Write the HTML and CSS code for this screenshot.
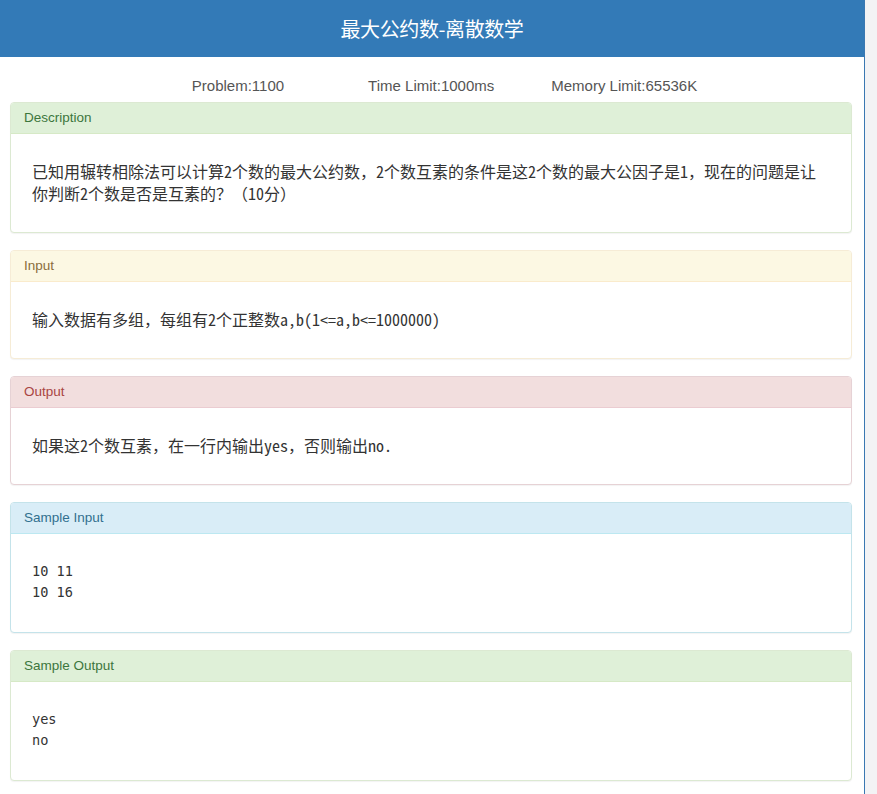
FILE: index.html
```html
<!DOCTYPE html>
<html lang="zh-CN">
<head>
<meta charset="utf-8">
<title>最大公约数-离散数学</title>
<link rel="stylesheet" href="styles.css">
</head>
<body>
<div class="page">
  <header class="header">
    <h1 class="title">最大公约数-离散数学</h1>
  </header>
  <div class="meta">
    <span class="meta-item meta-problem">Problem:1100</span>
    <span class="meta-item meta-time">Time Limit:1000ms</span>
    <span class="meta-item">Memory Limit:65536K</span>
  </div>
  <main class="panels">
    <section class="panel panel-success">
      <div class="panel-heading">Description</div>
      <div class="panel-body">
        <p class="text">已知用辗转相除法可以计算2个数的最大公约数，2个数互素的条件是这2个数的最大公因子是1，现在的问题是让你判断2个数是否是互素的？（10分）</p>
      </div>
    </section>
    <section class="panel panel-warning">
      <div class="panel-heading">Input</div>
      <div class="panel-body">
        <p class="text">输入数据有多组，每组有2个正整数a,b(1&lt;=a,b&lt;=1000000)</p>
      </div>
    </section>
    <section class="panel panel-danger">
      <div class="panel-heading">Output</div>
      <div class="panel-body">
        <p class="text">如果这2个数互素，在一行内输出yes，否则输出no.</p>
      </div>
    </section>
    <section class="panel panel-info">
      <div class="panel-heading">Sample Input</div>
      <div class="panel-body sample">
        <pre class="code">10 11
10 16</pre>
      </div>
    </section>
    <section class="panel panel-success">
      <div class="panel-heading">Sample Output</div>
      <div class="panel-body sample">
        <pre class="code">yes
no</pre>
      </div>
    </section>
  </main>
</div>
</body>
</html>
```

FILE: styles.css
```css
html, body {
  margin: 0;
  padding: 0;
}
body {
  background: #f3f3f5;
  font-family: "Liberation Sans", Arial, "Noto Sans CJK SC", sans-serif;
  color: #333;
}
.page {
  width: 864px;
  min-height: 794px;
  background: #fff;
  border-right: 1px solid #3a78b2;
}
.header {
  height: 57px;
  background: #337ab7;
  display: flex;
  align-items: center;
  justify-content: center;
}
.title {
  margin: 0;
  font-family: "Noto Sans CJK SC", sans-serif;
  font-size: 20px;
  font-weight: 400;
  color: #fff;
  letter-spacing: -0.4px;
  line-height: 24px;
}
.meta {
  display: flex;
  justify-content: center;
  padding: 19px 0 6px 25px;
  font-size: 15px;
  line-height: 20px;
  color: #555;
}
.meta-problem {
  margin-right: 84px;
}
.meta-time {
  margin-right: 57px;
}
.panels {
  padding: 0 12px 0 10px;
}
.panel {
  border: 1px solid #ddd;
  border-radius: 4px;
  margin-bottom: 17px;
  background: #fff;
  box-shadow: 0 1px 1px rgba(0, 0, 0, 0.05);
}
.panel-heading {
  padding: 5px 13px;
  line-height: 20px;
  font-size: 13.5px;
  border-bottom: 1px solid transparent;
  border-radius: 3px 3px 0 0;
}
.panel-success { border-color: #dce9d2; }
.panel-success .panel-heading { background: #dff0d8; color: #3c763d; border-bottom-color: #d6e9c6; }
.panel-warning { border-color: #f6ecd6; }
.panel-warning .panel-heading { background: #fcf8e3; color: #8a6d3b; border-bottom-color: #faebcc; }
.panel-danger { border-color: #e6d2d5; }
.panel-danger .panel-heading { background: #f2dede; color: #a94442; border-bottom-color: #ebccd1; }
.panel-info { border-color: #c4e3ea; }
.panel-info .panel-heading { background: #d9edf7; color: #31708f; border-bottom-color: #bce8f1; }

.panel-body {
  padding: 26px 21px 28px;
}
.text {
  margin: 0;
  font-family: "Noto Sans Mono CJK SC", "DejaVu Sans Mono", "Noto Sans CJK SC", monospace;
  font-size: 16px;
  font-weight: 400;
  line-height: 22px;
  color: #333;
}
.sample {
  padding-top: 27px;
  padding-bottom: 29px;
}
.code {
  margin: 0;
  font-family: "DejaVu Sans Mono", "Liberation Mono", monospace;
  font-size: 13.6px;
  line-height: 21px;
  color: #333;
}
```
